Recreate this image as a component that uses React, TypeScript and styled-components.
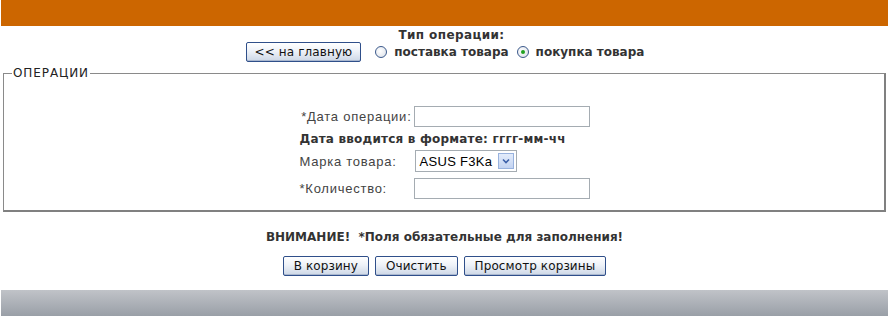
import React from "react";
import styled, { createGlobalStyle } from "styled-components";

const Global = createGlobalStyle`
  html, body { margin: 0; padding: 0; background: #fff; }
  body { font-family: "DejaVu Sans", Verdana, sans-serif; color: #333; }
`;

const Page = styled.div`
  width: 887px;
  margin: 0 1px;
  display: flex;
  flex-direction: column;
`;

const Header = styled.div`
  height: 26px;
  background: #cc6600;
`;

const TopBlock = styled.div`
  display: flex;
  flex-direction: column;
  align-items: center;
  padding-top: 3px;
`;

const Title = styled.div`
  font-weight: bold;
  font-size: 12px;
  line-height: 13px;
  color: #333;
  padding-left: 14px;
  letter-spacing: 0.4px;
`;

const TopRow = styled.div`
  display: flex;
  align-items: center;
  height: 20px;
  margin-left: 1px;
`;

const Button = styled.button<{ $pad?: number }>`
  height: 20px;
  padding: 0 ${(p) => p.$pad ?? 10}px;
  border: 1px solid #2f4f8a;
  border-radius: 2px;
  background: linear-gradient(#ffffff 0%, #eef2f8 45%, #cdd7e6 100%);
  font-family: "DejaVu Sans", Tahoma, sans-serif;
  font-size: 12px;
  letter-spacing: 0.1px;
  color: #111;
  line-height: 18px;
  box-shadow: inset 0 -1px 0 #a9b7cf;
`;

const RadioLabel = styled.label<{ $first?: boolean }>`
  display: inline-flex;
  align-items: center;
  font-weight: bold;
  font-size: 12px;
  color: #333;
  margin-left: ${(p) => (p.$first ? "14px" : "8px")};
`;

const RadioDot = styled.span<{ $checked?: boolean }>`
  width: 12px;
  height: 12px;
  border-radius: 50%;
  border: 1px solid #3c5a8c;
  background: radial-gradient(circle at 40% 40%, #ffffff 0%, #e4e8ee 70%, #c8ced8 100%);
  margin-right: 7px;
  display: inline-flex;
  align-items: center;
  justify-content: center;
  box-sizing: border-box;
  &::after {
    content: "";
    display: ${(p) => (p.$checked ? "block" : "none")};
    width: 4px;
    height: 4px;
    border-radius: 50%;
    background: #21a121;
  }
`;

const Fieldset = styled.fieldset`
  margin: 4px 2px 0 2px;
  border-style: solid;
  border-width: 1px 2px 2px 1px;
  border-color: #8a8a8a #808080 #808080 #8a8a8a;
  padding: 24px 0 6px;
  display: flex;
  justify-content: center;
`;

const Legend = styled.legend`
  font-family: "DejaVu Sans", Verdana, sans-serif;
  font-size: 12px;
  color: #222;
  padding: 0 1px;
  margin-left: 8px;
  letter-spacing: 0.9px;
`;

const FormGrid = styled.div`
  display: grid;
  grid-template-columns: 114px 176px;
  align-items: center;
  margin-left: 1px;
`;

const Label = styled.div<{ $right?: boolean }>`
  width: 100%;
  font-family: "Liberation Sans", Arial, sans-serif;
  font-size: 13px;
  letter-spacing: 0.75px;
  color: #444;
  text-align: ${(p) => (p.$right ? "right" : "left")};
  padding-right: ${(p) => (p.$right ? "2px" : "0")};
`;

const Input = styled.input`
  box-sizing: border-box;
  width: 176px;
  height: 21px;
  border: 1px solid #a5acb2;
  padding: 0;
`;

const Hint = styled.div`
  grid-column: 1 / span 2;
  font-weight: bold;
  font-size: 12px;
  letter-spacing: 0.2px;
  color: #333;
  height: 22px;
  line-height: 22px;
`;

const SelectBox = styled.div`
  box-sizing: border-box;
  width: 102px;
  height: 22px;
  border: 1px solid #a5acb2;
  display: flex;
  align-items: center;
  justify-content: space-between;
  padding: 0 2px 0 4px;
  margin-left: 1px;
  font-family: "Liberation Sans", Arial, sans-serif;
  font-size: 13px;
  letter-spacing: 0.3px;
  color: #000;
`;

const Arrow = styled.span`
  width: 16px;
  height: 16px;
  box-sizing: border-box;
  border: 1px solid #98b2de;
  background: linear-gradient(#e3ecfb, #c3d3f1);
  display: inline-flex;
  align-items: center;
  justify-content: center;
`;

const Cell = styled.div<{ $h: number }>`
  height: ${(p) => p.$h}px;
  display: flex;
  align-items: center;
`;

const Warning = styled.div`
  text-align: center;
  font-weight: bold;
  font-size: 12px;
  color: #333;
  margin-top: 18px;
  line-height: 14px;
`;

const Buttons = styled.div`
  display: flex;
  justify-content: center;
  gap: 6px;
  margin-top: 12px;
`;

const Footer = styled.div`
  height: 26px;
  margin-top: 14px;
  background: linear-gradient(#c0c3c8, #999fa7);
`;

export default function App() {
  return (
    <>
      <Global />
      <Page>
        <Header />
        <TopBlock>
          <Title>Тип операции:</Title>
          <TopRow>
            <Button $pad={8}>&lt;&lt; на главную</Button>
            <RadioLabel $first>
              <RadioDot />
              поставка товара
            </RadioLabel>
            <RadioLabel>
              <RadioDot $checked />
              покупка товара
            </RadioLabel>
          </TopRow>
        </TopBlock>
        <Fieldset>
          <Legend>ОПЕРАЦИИ</Legend>
          <FormGrid>
            <Cell $h={24}>
              <Label $right>*Дата операции:</Label>
            </Cell>
            <Cell $h={24}>
              <Input type="text" />
            </Cell>
            <Hint>Дата вводится в формате: гггг-мм-чч</Hint>
            <Cell $h={22}>
              <Label>Марка товара:</Label>
            </Cell>
            <Cell $h={22}>
              <SelectBox>
                ASUS F3Ka
                <Arrow>
                  <svg width="8" height="6" viewBox="0 0 8 6">
                    <path d="M1 1.5 L4 4.5 L7 1.5" fill="none" stroke="#3b5fa8" strokeWidth="1.6" />
                  </svg>
                </Arrow>
              </SelectBox>
            </Cell>
            <Cell $h={32}>
              <Label>*Количество:</Label>
            </Cell>
            <Cell $h={32}>
              <Input type="text" />
            </Cell>
          </FormGrid>
        </Fieldset>
        <Warning>ВНИМАНИЕ! &nbsp;*Поля обязательные для заполнения!</Warning>
        <Buttons>
          <Button>В корзину</Button>
          <Button>Очистить</Button>
          <Button>Просмотр корзины</Button>
        </Buttons>
        <Footer />
      </Page>
    </>
  );
}
